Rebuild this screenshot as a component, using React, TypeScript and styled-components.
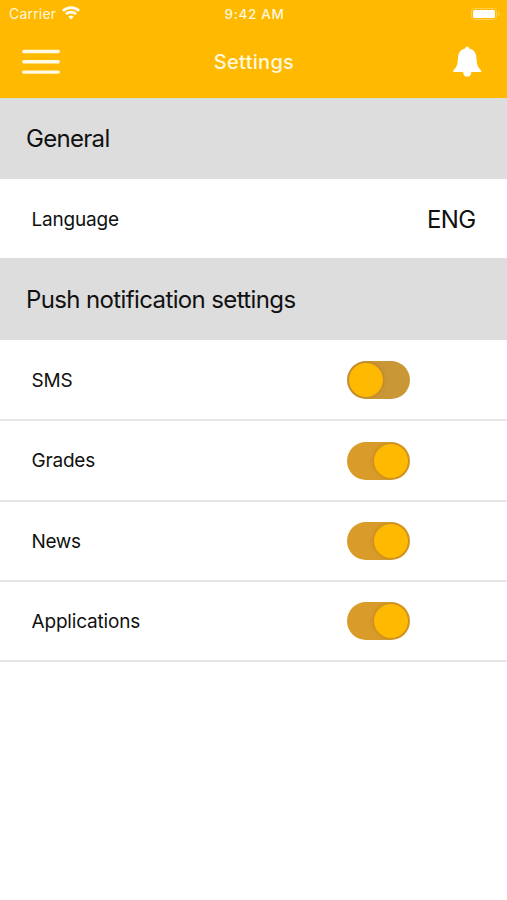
import React, { useState } from "react";
import styled, { createGlobalStyle } from "styled-components";

const amber = "#ffb900";

const GlobalStyle = createGlobalStyle`
  * { box-sizing: border-box; }
  body { margin: 0; background: #fff; font-family: Inter, "Liberation Sans", sans-serif; }
`;

const Screen = styled.main`
  min-height: 900px;
  background: #fff;
  color: #111;
`;

const Header = styled.header`
  height: 98px;
  background: ${amber};
  color: #fff8dc;
`;

const StatusBar = styled.div`
  display: grid;
  grid-template-columns: 1fr auto 1fr;
  align-items: center;
  height: 27px;
  padding: 0 7px 0 9px;
`;

const Carrier = styled.div`
  display: flex;
  align-items: center;
  gap: 6px;
`;

const Battery = styled.div`
  display: flex;
  justify-content: flex-end;
`;

const NavBar = styled.div`
  display: grid;
  grid-template-columns: 1fr auto 1fr;
  align-items: center;
  height: 70px;
  padding: 0 25px 0 22px;
`;

const IconButton = styled.button<{ $end?: boolean }>`
  display: flex;
  justify-self: ${(p) => (p.$end ? "end" : "start")};
  padding: 0;
  border: 0;
  background: none;
`;

const Text = styled.span<{ $size: number; $tracking?: number; $weight?: number; $drop?: number }>`
  padding-top: ${(p) => p.$drop ?? 0}px;
  font-size: ${(p) => p.$size}px;
  font-weight: ${(p) => p.$weight ?? 400};
  letter-spacing: ${(p) => p.$tracking ?? 0}px;
  line-height: 1.2;
  white-space: nowrap;
`;

const Title = styled.h1`
  margin: 0 0 0 4px;
  font-size: 20px;
  font-weight: 550;
  letter-spacing: 0.3px;
  line-height: 1.2;
`;

const SectionHeading = styled.h2<{ $height: number }>`
  display: flex;
  align-items: center;
  height: ${(p) => p.$height}px;
  margin: 0;
  padding-left: 26px;
  background: #ddd;
`;

const Row = styled.div<{ $height: number; $right: number; $divided?: boolean }>`
  display: flex;
  align-items: center;
  justify-content: space-between;
  height: ${(p) => p.$height}px;
  padding: 0 ${(p) => p.$right}px 0 31.5px;
  border-bottom: ${(p) => (p.$divided ? "2px solid #e6e6e6" : "0")};
`;

const Track = styled.button<{ $on: boolean }>`
  display: flex;
  align-items: center;
  justify-content: ${(p) => (p.$on ? "flex-end" : "flex-start")};
  width: 63px;
  height: 38px;
  padding: 0 2px;
  border: 0;
  border-radius: 19px;
  overflow: hidden;
  background: ${(p) => (p.$on ? "#d99c2b" : "#ca9737")};
`;

const Knob = styled.span`
  width: 34px;
  height: 34px;
  border-radius: 50%;
  background: ${amber};
  box-shadow: 0 0 4px 0 rgba(150, 95, 10, 0.45);
`;

const notifications = [
  { label: "SMS", enabled: false, height: 81, tracking: -0.2, drop: 3 },
  { label: "Grades", enabled: true, height: 81, tracking: -0.2, drop: 2 },
  { label: "News", enabled: true, height: 80, tracking: -0.4, drop: 2 },
  { label: "Applications", enabled: true, height: 80, tracking: -0.18, drop: 2 },
];

function WifiIcon() {
  return (
    <svg width="18" height="14" viewBox="0 0 18 14" fill="none" stroke="#fffdf2" strokeWidth="2.7">
      <path d="M.9 4.9a11.5 11.5 0 0 1 16.2 0" />
      <path d="M4 8.1a7.1 7.1 0 0 1 10 0" />
      <path d="M6.4 10.8a3.7 3.7 0 0 1 5.2 0L9 13.6Z" fill="#fffdf2" stroke="none" />
    </svg>
  );
}

function BatteryIcon() {
  return (
    <svg width="30" height="14" viewBox="0 0 30 14">
      <rect x="1.5" y="1.5" width="25" height="11" rx="3" fill="none" stroke="#ffcf52" />
      <rect x="3" y="3" width="22" height="8" rx="1.5" fill="#fff" />
      <path d="M28 5a2.1 2.1 0 0 1 0 4Z" fill="#ffcf52" />
    </svg>
  );
}

function MenuIcon() {
  return (
    <svg width="38" height="26" viewBox="0 0 38 26" stroke="#fffae5" strokeWidth="3.4" strokeLinecap="round">
      <path d="M1.7 2.5h34.6M1.7 12.8h34.6M1.7 23.1h34.6" />
    </svg>
  );
}

function BellIcon() {
  return (
    <svg width="30" height="32" viewBox="0 0 30 32" fill="#fff">
      <path d="M15.2.5c1.2 0 1.8.8 1.9 2 4.6.9 7 4.3 7.3 8.8.4 6.7 1 9.7 4.3 12.6.9.8.7 2.100-.6 2.100H2.300c-1.300 0-1.500-1.300-.6-2.100C5.200 21 5.600 18 6 11.300c.3-4.500 2.700-7.900 7.300-8.800.1-1.200.7-2 1.900-2Z" />
      <path d="M11.1 26h8.2a4.1 4.8 0 0 1-8.2 0Z" />
    </svg>
  );
}

function Toggle({ label, initial }: { label: string; initial: boolean }) {
  const [on, setOn] = useState(initial);
  return (
    <Track $on={on} role="switch" aria-checked={on} aria-label={label} onClick={() => setOn(!on)}>
      <Knob />
    </Track>
  );
}

export default function App() {
  return (
    <Screen>
      <GlobalStyle />
      <Header>
        <StatusBar>
          <Carrier>
            <Text $size={14} $tracking={0.2} $drop={1}>Carrier</Text>
            <WifiIcon />
          </Carrier>
          <Text $size={13.5} $weight={550} $tracking={0.65} $drop={1}>9:42 AM</Text>
          <Battery><BatteryIcon /></Battery>
        </StatusBar>
        <NavBar>
          <IconButton aria-label="Menu"><MenuIcon /></IconButton>
          <Title>Settings</Title>
          <IconButton $end aria-label="Notifications"><BellIcon /></IconButton>
        </NavBar>
      </Header>
      <SectionHeading $height={81}>
        <Text $size={24} $tracking={-0.7} $drop={2}>General</Text>
      </SectionHeading>
      <Row $height={79} $right={31.5}>
        <Text $size={19} $tracking={-0.2} $drop={3}>Language</Text>
        <Text $size={24} $tracking={-0.6} $drop={3}>ENG</Text>
      </Row>
      <SectionHeading $height={82}>
        <Text $size={24} $tracking={-0.62} $drop={2}>Push notification settings</Text>
      </SectionHeading>
      {notifications.map((n) => (
        <Row key={n.label} $height={n.height} $right={97} $divided>
          <Text $size={19} $tracking={n.tracking} $drop={n.drop}>{n.label}</Text>
          <Toggle label={n.label} initial={n.enabled} />
        </Row>
      ))}
    </Screen>
  );
}
